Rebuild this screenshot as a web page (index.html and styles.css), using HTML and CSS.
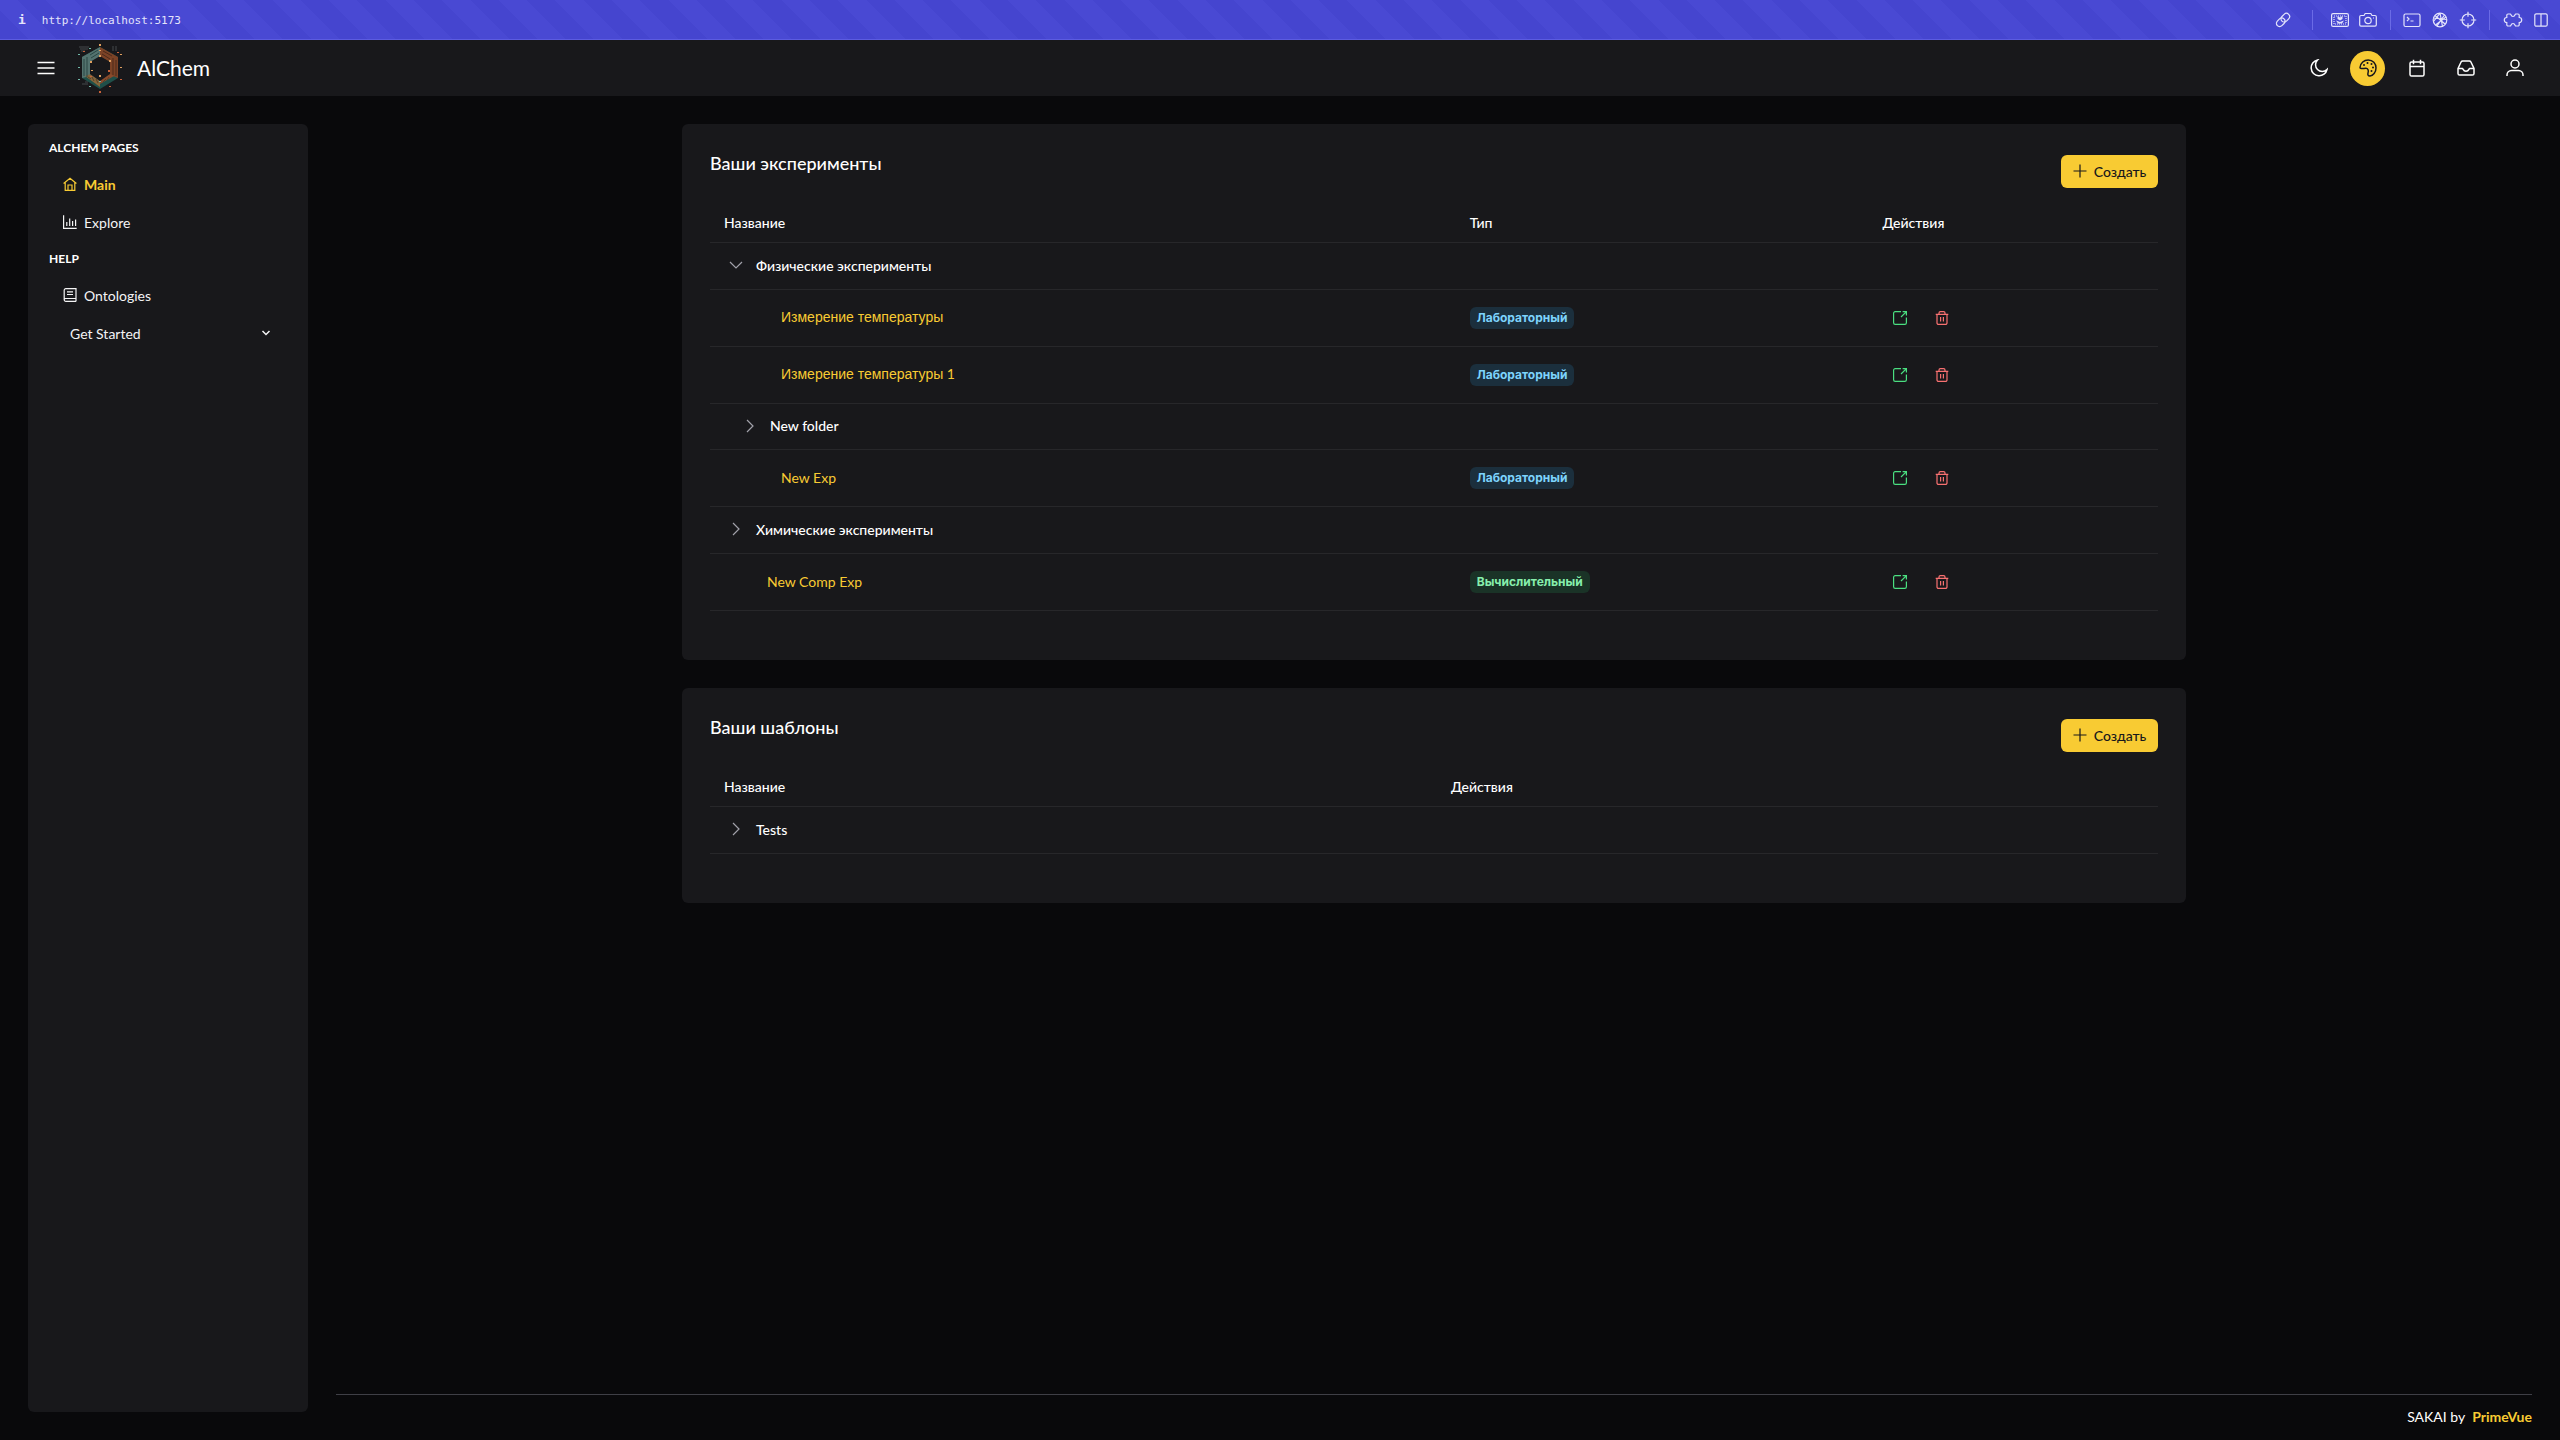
FILE: index.html
```html
<!DOCTYPE html>
<html lang="ru">
<head>
<meta charset="utf-8">
<title>AlChem</title>
<link rel="stylesheet" href="styles.css">
</head>
<body>
<svg class="sprite" aria-hidden="true">
  <symbol id="open" viewBox="0 0 14 14"><path d="M8 .6H2.2A1.6 1.6 0 0 0 .6 2.2v9.6a1.6 1.6 0 0 0 1.6 1.6h9.6a1.6 1.6 0 0 0 1.6-1.6V6.500M8 6 13.2.8M9.6.6h3.8v3.8"/></symbol>
  <symbol id="trash" viewBox="0 0 14 14"><path d="M.7 3.3h12.6M2 3.3v8.6a1.5 1.5 0 0 0 1.5 1.5h7a1.5 1.5 0 0 0 1.5-1.5V3.3M4 3.3V2A1.4 1.4 0 0 1 5.400.6h3.200A1.400 1.400 0 0 1 10 2v1.300M5.600 6v4.500M8.400 6v4.500"/></symbol>
  <symbol id="right" viewBox="0 0 14 14"><path d="m4 1 6 6-6 6"/></symbol>
  <symbol id="down" viewBox="0 0 14 14"><path d="m1 4 6 6 6-6"/></symbol>
  <symbol id="plus" viewBox="0 0 14 14"><path d="M7 .5v13M.5 7h13"/></symbol>
</svg>

<header class="devbar">
  <span class="devbar__info">i</span>
  <span class="devbar__url">http://localhost:5173</span>
  <div class="devbar__tools">
    <div class="devbar__group">
      <svg class="tool" viewBox="0 0 18 18"><g transform="rotate(-45 9 9)"><rect x="1" y="5.800" width="9.500" height="6.400" rx="3.200"/><rect x="7.500" y="5.800" width="9.500" height="6.400" rx="3.200"/></g></svg>
    </div>
    <div class="devbar__group devbar__group--device">
      <svg class="tool" viewBox="0 0 18 18"><rect x=".6" y="2.600" width="16.800" height="12.800" rx="1.500"/><path stroke-dasharray="1 1" d="M3 5h12v8H3z"/><path fill="currentColor" stroke="none" d="M6.500 5 9 6.500 11.500 5v3L9 9.500 6.500 8zM5 9.500l4 1.500 4-1.500-2 3H7z"/></svg>
      <svg class="tool" viewBox="0 0 18 18"><path d="M2 4.500h3l1.200-2h5.600l1.200 2h3a1.300 1.300 0 0 1 1.300 1.300v8a1.300 1.300 0 0 1-1.300 1.300H2a1.300 1.300 0 0 1-1.300-1.300v-8A1.300 1.300 0 0 1 2 4.500zM14 7h1"/><circle cx="9" cy="9.500" r="3.200"/></svg>
    </div>
    <div class="devbar__group devbar__group--debug">
      <svg class="tool" viewBox="0 0 18 18"><rect x="1" y="3" width="16" height="12.500" rx="1.500"/><path d="m4 6 2 2-2 2M7.500 10h3"/></svg>
      <svg class="tool" viewBox="0 0 18 18"><circle cx="9" cy="9" r="6.800"/><path d="M4 4.500 14 13M2.500 10.500 9 2.200M9 2.200l2.500 13.300M2.500 7 15.700 8.500M4.500 14 15 6M6 15l7.500-11"/></svg>
      <svg class="tool" viewBox="0 0 18 18"><circle cx="9" cy="9" r="6"/><path d="M9 .8v5M9 12.200v5M.8 9h5M12.200 9h5"/></svg>
    </div>
    <div class="devbar__group devbar__group--layout">
      <svg class="tool tool--wide" viewBox="0 0 20 18"><path d="M5 3h2.500c.3 0 .5 2.500 2.500 2.500S12.200 3 12.500 3H15a1.200 1.200 0 0 1 1.200 1.200v2.300a2.500 2.500 0 0 1 0 5v2.300A1.200 1.200 0 0 1 15 15h-2.500c-.3 0-.5-2.500-2.500-2.500S7.800 15 7.500 15H5a1.200 1.200 0 0 1-1.200-1.200v-2.300a2.500 2.500 0 0 1 0-5V4.200A1.200 1.200 0 0 1 5 3z"/></svg>
      <svg class="tool tool--small" viewBox="0 0 14 14"><rect x=".8" y=".8" width="12.400" height="12.400" rx="1.500"/><path d="M7 1v12"/></svg>
    </div>
  </div>
</header>

<header class="topbar">
  <button class="menu" aria-label="Menu"><svg viewBox="0 0 18 14"><path d="M.5 1.500h17M.5 7h17M.5 12.500h17"/></svg></button>
  <a class="brand" href="#">
    <svg class="logo" viewBox="0 0 44 50">
      <g stroke="none">
        <path fill="#1f4f49" d="M22 4 40 14v21L22 46 4 35V14z"/>
        <path fill="#54736f" d="M22 4v10l-9 5v14l-9 2V14z"/>
        <path fill="#7b4226" d="m22 4 18 10v21l-8-3V19l-10-5z"/>
        <path fill="#86653a" d="m7 33 6-2 9 7v6z"/>
        <path fill="#8a4a2b" d="m22 41 14-8-5-3-9 6z"/>
        <path fill="#18181b" d="m22 13 10 6v12l-10 7-10-7V19z"/>
      </g>
      <path class="logo__line" stroke="#2a4744" d="M6 16v17M9 14v20M12 12l8-5M13 15l8-5"/>
      <path class="logo__line" stroke="#4c2a1a" d="M38 17v16M35 15v17M25 8l9 5M24 11l8 5"/>
      <path class="logo__line" stroke="#54402a" d="m10 34 3 2M14 34l2 4M18 36l2 4M25 39l3-3M29 37l2-3"/>
      <path class="logo__line" stroke="#45494c" d="M1 4h10M2 6h8M3 8h4M4 41h6M7 39h3M35 3v5M38 3v5"/>
      <path class="logo__dots" stroke="#e0a060" d="M22 1v2M22 12v2M32 17v2M13 18v2M43 24v1M43 11v1M14 27v1M22 32v2M22 7v1"/>
      <path class="logo__dots" stroke="#c8623a" d="M22 48v2M32 43v1M43 36v1M31 27v2M13 33v1M40 9v1M6 8v1"/>
      <path class="logo__dots" stroke="#70b8a8" d="M1 11v1M1 24v1M1 36v1M12 5v1M12 43v1M22 38v1"/>
    </svg>
    <span>AlChem</span>
  </a>
  <div class="actions">
    <button aria-label="Dark mode"><svg viewBox="0 0 18 18"><path d="M7.500 1A8 8 0 1 0 17 10.500 6.500 6.500 0 0 1 7.500 1z"/></svg></button>
    <button class="is-active" aria-label="Theme"><svg viewBox="0 0 18 18"><path d="M1 8.500C1.500 4 5 1 9.200 1c4.600 0 7.800 3.500 7.800 8 0 4.400-3 7.800-6 8-2 .1-2.500-1.300-2-3 .6-2 .5-4.500-2-4.700C5 9.200 1 10.500 1 8.500z"/><path class="paint" d="M5 6v.1M8.500 4v.1M12.500 5v.1M14 8.500v.1M12.500 12v.1"/></svg></button>
    <button aria-label="Calendar"><svg viewBox="0 0 18 18"><rect x="2" y="3" width="14" height="14" rx="1.600"/><path d="M2 7.500h14M5.500.8v4.400M12.500.8v4.400"/></svg></button>
    <button aria-label="Inbox"><svg viewBox="0 0 18 18"><path d="M1 9.500 4.200 2.800A1.600 1.600 0 0 1 5.600 2h6.800a1.600 1.600 0 0 1 1.400.8L17 9.500v5a1.600 1.600 0 0 1-1.600 1.600H2.600A1.600 1.600 0 0 1 1 14.500zM1 9.500h4.500c.5 0 .7 2.800 3.500 2.800s3-2.800 3.500-2.800H17"/></svg></button>
    <button aria-label="Profile"><svg viewBox="0 0 18 18"><circle cx="9" cy="5" r="4"/><path d="M1 17v-1c0-2.500 2-4.500 4.500-4.500h7c2.500 0 4.500 2 4.500 4.500v1"/></svg></button>
  </div>
</header>

<div class="layout">
  <nav class="sidebar">
    <h2>AlChem pages</h2>
    <a class="is-current" href="#"><svg viewBox="0 0 14 14"><path d="M.6 6.500 7 1.200l6.400 5.300M2.200 5.500v7.900h9.600V5.500M5 13.400V8h4v5.400"/></svg>Main</a>
    <a href="#"><svg viewBox="0 0 14 14"><path d="M.6.300v13.100h13.100M3.800 7v4M6.700 3.500V11M9.600 6v5M12.600 4.500V11"/></svg>Explore</a>
    <h2>Help</h2>
    <a href="#"><svg viewBox="0 0 14 14"><path d="M13 10.500V.6H2.800A1.600 1.600 0 0 0 1.200 2.200v9.600a1.600 1.600 0 0 0 1.600 1.600H13M1.200 11.800a1.400 1.400 0 0 1 1.600-1.300H13v2.900M4 3.800h6M4 6.500h6"/></svg>Ontologies</a>
    <a class="submenu" href="#">Get Started<svg viewBox="0 0 14 14"><path d="m3.500 5 3.500 3.500L10.500 5"/></svg></a>
  </nav>

  <div class="content">
    <main>
      <section class="card">
        <div class="card__head">
          <h1>Ваши эксперименты</h1>
          <button class="create"><svg><use href="#plus"/></svg>Создать</button>
        </div>
        <table class="tree tree--experiments">
          <colgroup><col class="col-name"><col class="col-type"><col></colgroup>
          <thead><tr><th>Название</th><th>Тип</th><th>Действия</th></tr></thead>
          <tbody>
            <tr class="folder"><td colspan="3"><div class="node"><button class="toggle" aria-label="Свернуть"><svg><use href="#down"/></svg></button>Физические эксперименты</div></td></tr>
            <tr><td><a class="leaf leaf--deep" href="#"><span class="plain">Измерение температуры</span></a></td><td><span class="tag">Лабораторный</span></td><td><div class="ops"><button class="op-open" aria-label="Открыть"><svg><use href="#open"/></svg></button><button class="op-delete" aria-label="Удалить"><svg><use href="#trash"/></svg></button></div></td></tr>
            <tr><td><a class="leaf leaf--deep" href="#"><span class="plain">Измерение температуры</span> 1</a></td><td><span class="tag">Лабораторный</span></td><td><div class="ops"><button class="op-open" aria-label="Открыть"><svg><use href="#open"/></svg></button><button class="op-delete" aria-label="Удалить"><svg><use href="#trash"/></svg></button></div></td></tr>
            <tr class="folder folder--nested"><td colspan="3"><div class="node"><button class="toggle" aria-label="Развернуть"><svg><use href="#right"/></svg></button>New folder</div></td></tr>
            <tr><td><a class="leaf leaf--deep" href="#">New Exp</a></td><td><span class="tag">Лабораторный</span></td><td><div class="ops"><button class="op-open" aria-label="Открыть"><svg><use href="#open"/></svg></button><button class="op-delete" aria-label="Удалить"><svg><use href="#trash"/></svg></button></div></td></tr>
            <tr class="folder"><td colspan="3"><div class="node"><button class="toggle" aria-label="Развернуть"><svg><use href="#right"/></svg></button>Химические эксперименты</div></td></tr>
            <tr><td><a class="leaf" href="#">New Comp Exp</a></td><td><span class="tag tag--green">Вычислительный</span></td><td><div class="ops"><button class="op-open" aria-label="Открыть"><svg><use href="#open"/></svg></button><button class="op-delete" aria-label="Удалить"><svg><use href="#trash"/></svg></button></div></td></tr>
          </tbody>
        </table>
      </section>

      <section class="card">
        <div class="card__head">
          <h1>Ваши шаблоны</h1>
          <button class="create"><svg><use href="#plus"/></svg>Создать</button>
        </div>
        <table class="tree">
          <colgroup><col class="col-half"><col></colgroup>
          <thead><tr><th>Название</th><th>Действия</th></tr></thead>
          <tbody>
            <tr class="folder"><td colspan="2"><div class="node"><button class="toggle" aria-label="Развернуть"><svg><use href="#right"/></svg></button>Tests</div></td></tr>
          </tbody>
        </table>
      </section>
    </main>
    <footer>SAKAI by <a href="#">PrimeVue</a></footer>
  </div>
</div>
</body>
</html>
```
FILE: styles.css
```css
* { box-sizing: border-box; }

:root {
  --primary: #f8cb33;
  --surface: #18181b;
  --ground: #09090b;
  --line: #27272a;
}

body {
  margin: 0;
  min-height: 100vh;
  display: flex;
  flex-direction: column;
  background: var(--ground);
  color: #fff;
  font: 14px/17px Lato, "Liberation Sans", sans-serif;
}

h1, h2 { margin: 0; }
a { color: inherit; text-decoration: none; }
button {
  display: flex;
  align-items: center;
  justify-content: center;
  padding: 0;
  border: 0;
  background: none;
  color: inherit;
  font: inherit;
}
svg { flex: none; width: 14px; height: 14px; fill: none; stroke: currentColor; stroke-width: 1.2; }
.sprite { display: none; }

/* Browser strip */
.devbar {
  height: 40px;
  display: flex;
  align-items: center;
  gap: 16px;
  padding: 0 12px 0 18px;
  border-bottom: 1px solid #5c5ce0;
  background: repeating-linear-gradient(45deg, #4545cf 0 20px, #4949d3 20px 40px);
  color: #e4e4fb;
  font: 11px/16px "DejaVu Sans Mono", monospace;
}
.devbar__info { font-size: 13px; font-weight: 700; }
.devbar__url { padding-top: 2px; }
.devbar__tools { display: flex; margin-left: auto; align-items: center; }
.devbar__group { display: flex; align-items: center; gap: 10px; padding-right: 20px; }
.devbar__group + .devbar__group { height: 20px; border-left: 1px solid #6b6be6; padding-left: 18px; }
.devbar .devbar__group--device { padding-right: 13px; }
.devbar .devbar__group--debug { padding: 0 12px; }
.devbar .devbar__group--layout { padding: 0 0 0 13px; gap: 11px; }
.tool { width: 18px; height: 18px; }
.tool--wide { width: 20px; }
.tool--small { width: 14px; height: 14px; }

/* Application header */
.topbar {
  height: 56px;
  display: flex;
  align-items: center;
  padding: 0 28px;
  background: var(--surface);
}
.menu { width: 35px; height: 35px; }
.menu svg { width: 18px; height: 14px; stroke-width: 1.5; }
.brand { display: flex; align-items: center; gap: 14px; margin-left: 14px; font-size: 21px; line-height: 28px; }
.logo { width: 46px; height: 50px; }
.logo__line { stroke-width: 1; }
.logo__dots { stroke-width: 2; }
.actions { display: flex; gap: 14px; margin-left: auto; }
.actions button { width: 35px; height: 35px; padding-bottom: 1px; border-radius: 50%; }
.actions svg { width: 18px; height: 18px; stroke-width: 1.5; }
.actions .is-active { background: var(--primary); color: var(--surface); }
.actions .paint { stroke-width: 2; stroke-linecap: round; }

/* Page frame */
.layout { flex: 1; display: flex; gap: 28px; padding: 28px 28px 0; }
.sidebar {
  width: 280px;
  margin-bottom: 28px;
  padding: 7px 21px;
  border-radius: 6px;
  background: var(--surface);
}
.sidebar h2 { height: 35px; font-size: 12px; line-height: 34px; font-weight: 700; text-transform: uppercase; }
.sidebar a { display: flex; align-items: center; gap: 7px; height: 38px; padding: 0 14px 2px; color: #f4f4f5; }
.sidebar .is-current { color: var(--primary); font-weight: 700; }
.sidebar .submenu { justify-content: space-between; padding-left: 21px; }
.submenu svg { stroke-width: 1.5; }

.content { flex: 1; display: flex; flex-direction: column; }
main { flex: 1; display: flex; flex-direction: column; gap: 28px; width: 100%; max-width: 1504px; margin: 0 auto; }

.card { padding: 28px 28px 49px; border-radius: 6px; background: var(--surface); }
.card__head { display: flex; justify-content: space-between; height: 52px; }
.card h1 { font-size: 18px; line-height: 22px; font-weight: 500; }
.create {
  gap: 7px;
  width: 97px;
  height: 33px;
  margin-top: 3px;
  padding-bottom: 1px;
  border-radius: 6px;
  background: var(--primary);
  color: var(--surface);
  font-weight: 500;
}

/* Tree tables */
.tree { width: 100%; table-layout: fixed; border-collapse: separate; border-spacing: 0; }
.col-name { width: 51.5%; }
.col-type { width: 28.5%; }
.col-half { width: 50.2%; }
.tree th, .tree td { padding: 0 14px; border-bottom: 1px solid var(--line); text-align: left; }
.tree th { height: 39px; padding-bottom: 2px; font-weight: 500; }
.tree td { height: 57px; }
.tree td:first-child { padding-bottom: 2px; }
.tree .folder td { height: 47px; font-weight: 500; }
.tree .folder--nested td { height: 46px; padding-left: 28px; }
.node { display: flex; align-items: center; gap: 8px; }
.toggle { width: 24px; height: 24px; color: #a1a1aa; }
.leaf { padding-left: 43px; color: var(--primary); }
.leaf--deep { padding-left: 57px; }
.plain { font-family: "Liberation Sans", sans-serif; }
.tag {
  display: inline-block;
  padding: 3px 7px;
  border-radius: 6px;
  background: #1b2f3d;
  color: #7dd3fc;
  font: 700 12px/16px Inter, "Liberation Sans", sans-serif;
  vertical-align: middle;
}
.tag--green { background: #1a3327; color: #86efac; }
.ops { display: flex; gap: 7px; }
.ops button { width: 35px; height: 35px; }
.op-open { color: #4ade80; }
.op-delete { color: #f87171; }

footer {
  display: flex;
  justify-content: flex-end;
  gap: 7px;
  height: 46px;
  padding-top: 13px;
  border-top: 1px solid #3f3f46;
}
footer a { color: var(--primary); font-weight: 700; }
```
